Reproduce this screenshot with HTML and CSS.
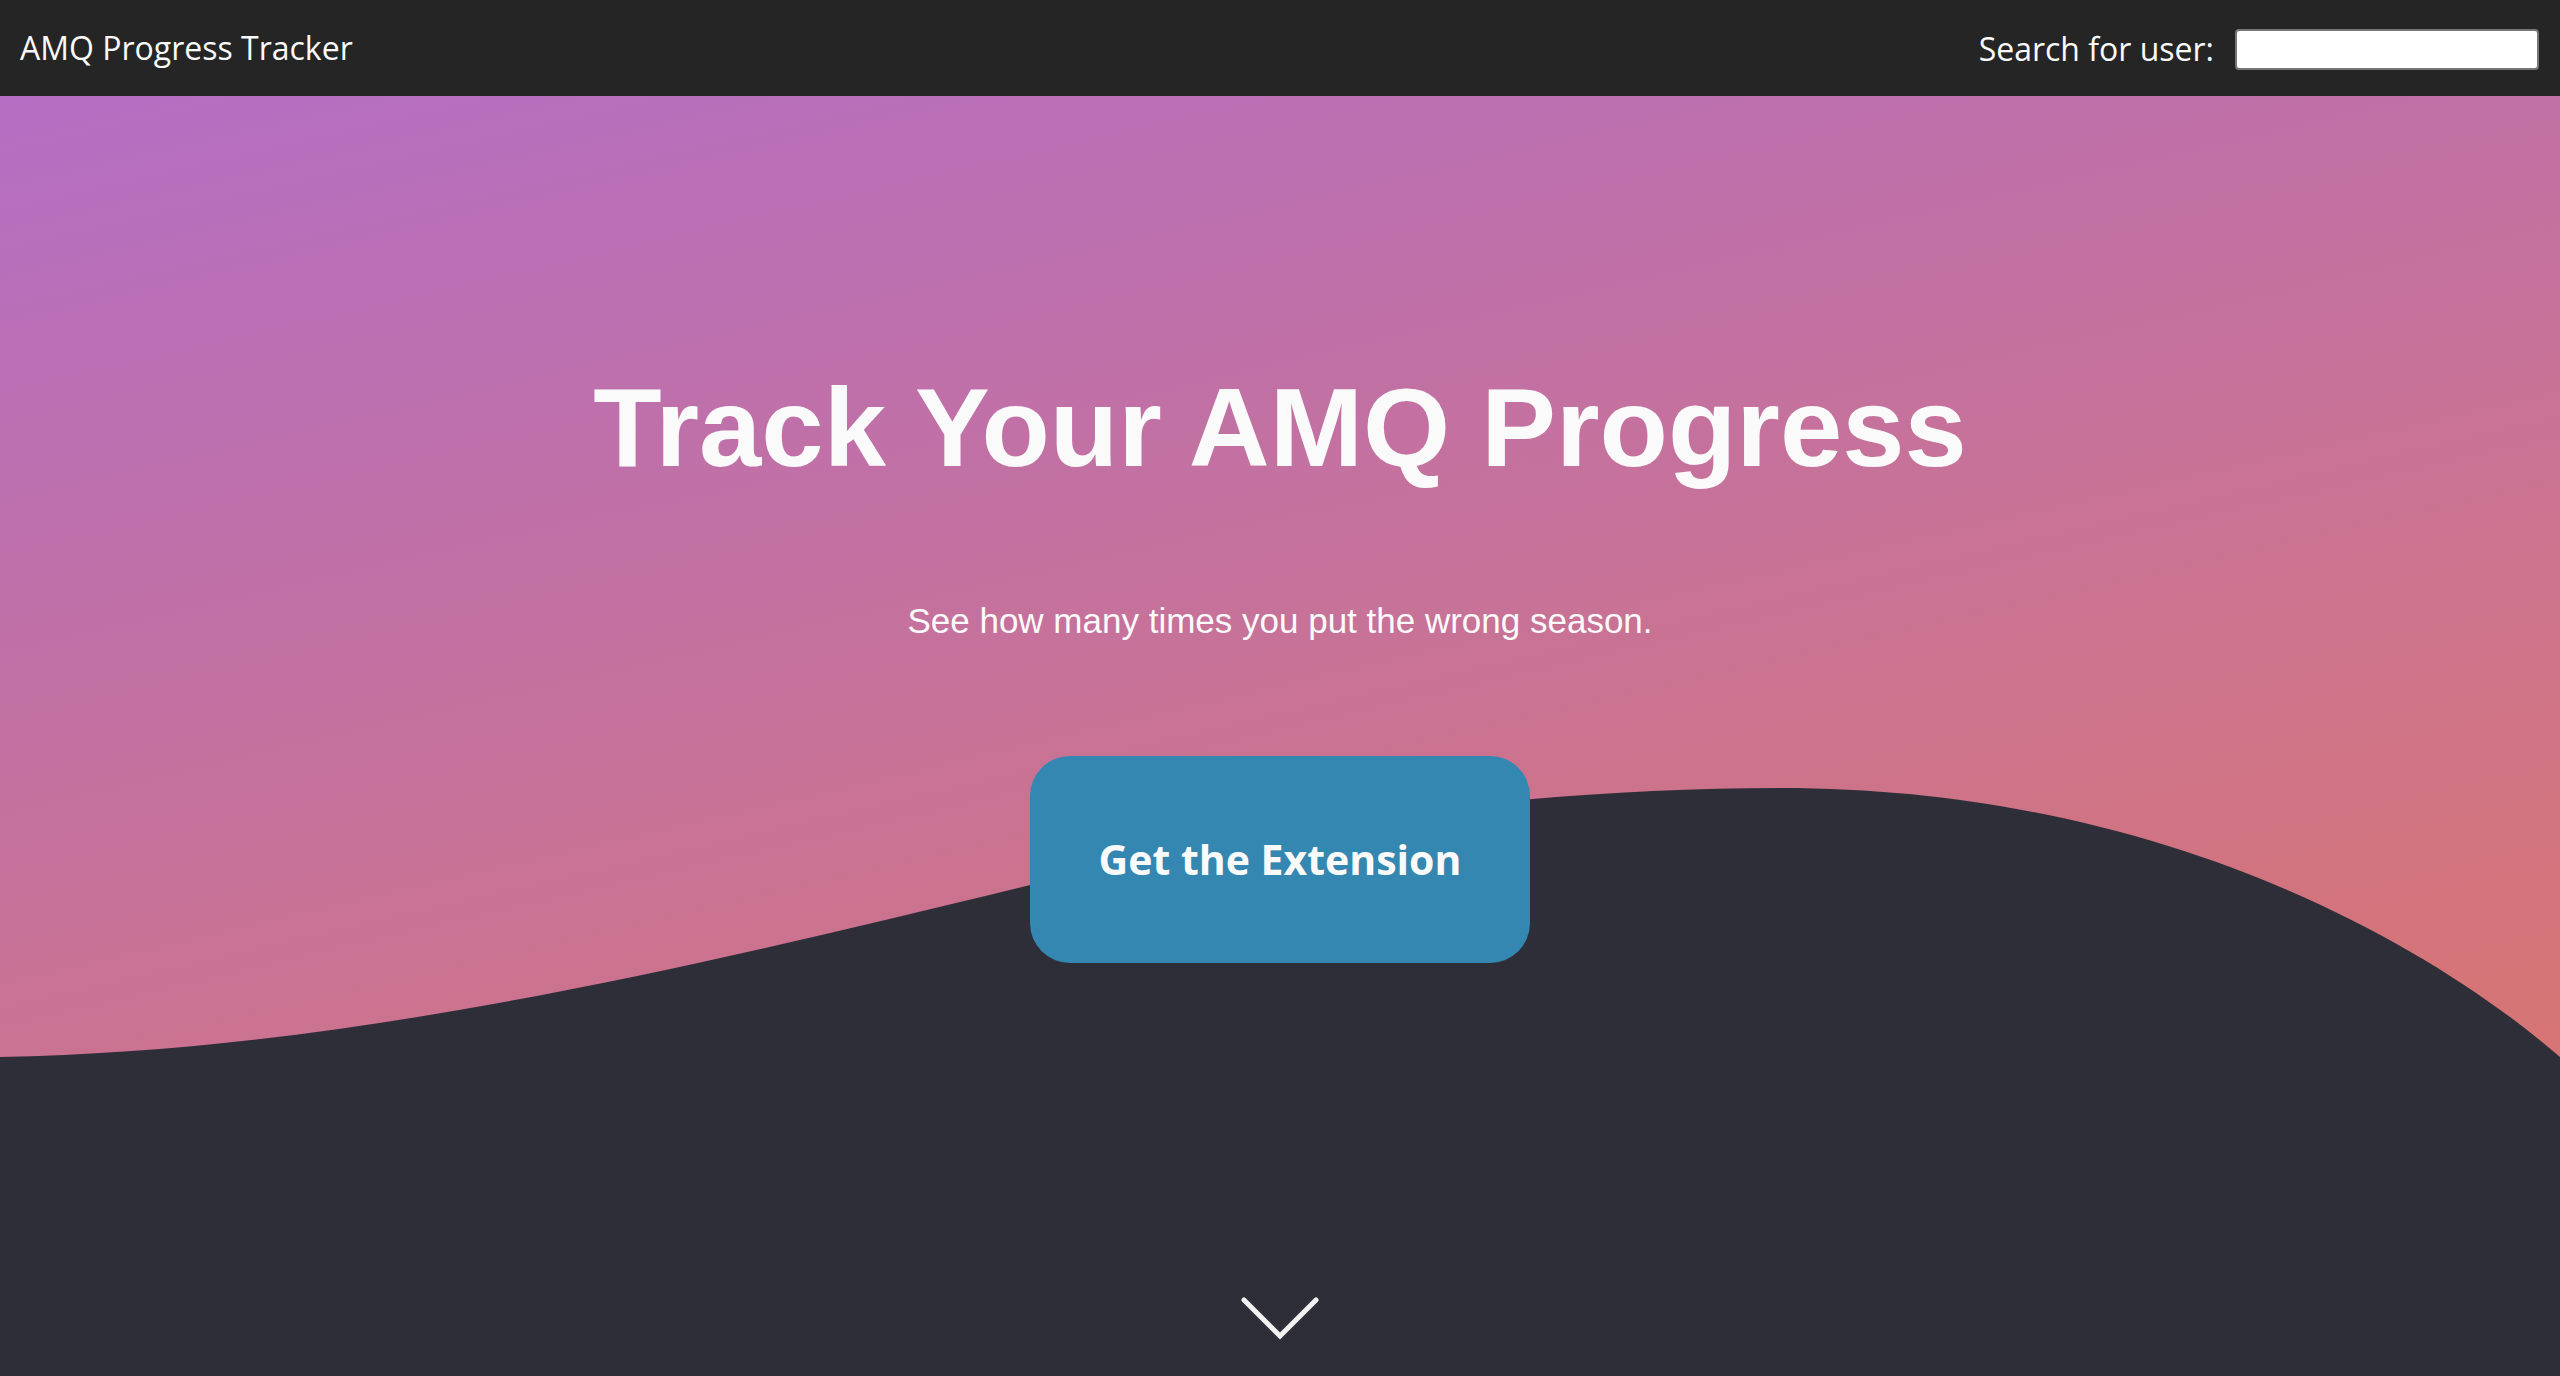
FILE: index.html
```html
<!DOCTYPE html>
<html lang="en">
<head>
<meta charset="utf-8">
<title>AMQ Progress Tracker</title>
<link rel="stylesheet" href="styles.css">
</head>
<body>
<nav class="navbar">
  <a class="brand" href="#">AMQ Progress Tracker</a>
  <form class="search">
    <label class="search-label" for="user">Search for user:</label>
    <input class="search-input" id="user" type="text">
  </form>
</nav>
<header class="hero">
  <svg class="wave" viewBox="0 0 2560 1280" preserveAspectRatio="none" aria-hidden="true">
    <path d="M0 961 C350 955 700 870 1100 772 C1300 723 1550 692 1780 692 C2150 692 2420 840 2560 961 L2560 1280 L0 1280 Z" fill="#2e2e38"/>
  </svg>
  <div class="hero-content">
    <h1 class="title">Track Your AMQ Progress</h1>
    <p class="subtitle">See how many times you put the wrong season.</p>
    <a class="cta" href="#">Get the Extension</a>
    <svg class="chevron" viewBox="0 0 80 44" aria-hidden="true">
      <polyline points="4,4 40,40 76,4" fill="none" stroke="#f2f2f2" stroke-width="5" stroke-linecap="round" stroke-linejoin="miter"/>
    </svg>
  </div>
</header>
</body>
</html>
```
FILE: styles.css
```css
* { box-sizing: border-box; }
html, body { margin: 0; padding: 0; }
body {
  background: #2e2e38;
  font-family: "Open Sans", "Noto Sans", sans-serif;
  color: #fafafa;
}
.navbar {
  height: 96px;
  background: #252525;
  display: flex;
  align-items: center;
  justify-content: space-between;
  padding: 0 21px 0 20px;
}
.brand {
  color: #fafafa;
  text-decoration: none;
  font-size: 32px;
  line-height: 1;
}
.search {
  display: flex;
  align-items: center;
  gap: 21px;
  margin: 0;
}
.search-label {
  font-size: 32px;
  color: #fafafa;
}
.search-input {
  width: 304px;
  height: 41px;
  margin-top: 2px;
  background: #fff;
  border: 2px solid #767676;
  border-radius: 4px;
  padding: 0 6px;
  font-size: 20px;
}
.hero {
  position: relative;
  height: 1280px;
  background: linear-gradient(167deg, rgb(180,110,195) 0%, rgb(214,117,118) 80%, rgb(220,116,108) 100%);
  overflow: hidden;
}
.wave {
  position: absolute;
  left: 0;
  top: 0;
  width: 100%;
  height: 100%;
  display: block;
}
.hero-content {
  position: relative;
  height: 100%;
  display: flex;
  flex-direction: column;
  align-items: center;
  padding: 265px 0 36px;
}
.title {
  margin: 0;
  font-family: "Liberation Sans", Arial, sans-serif;
  font-weight: 700;
  font-size: 112px;
  line-height: 1.2;
  color: #fafafa;
}
.subtitle {
  margin: 105px 0 0;
  font-family: "Liberation Sans", Arial, sans-serif;
  font-size: 35px;
  line-height: 1.2;
  color: #fafafa;
}
.cta {
  margin-top: 114px;
  width: 500px;
  height: 207px;
  display: flex;
  align-items: center;
  justify-content: center;
  background: #3387b1;
  border-radius: 40px;
  color: #fafafa;
  text-decoration: none;
  font-family: "Open Sans", sans-serif;
  font-weight: 700;
  font-size: 41px;
  padding-bottom: 2px;
}
.chevron {
  margin-top: auto;
  width: 80px;
  height: 44px;
  display: block;
}
```
